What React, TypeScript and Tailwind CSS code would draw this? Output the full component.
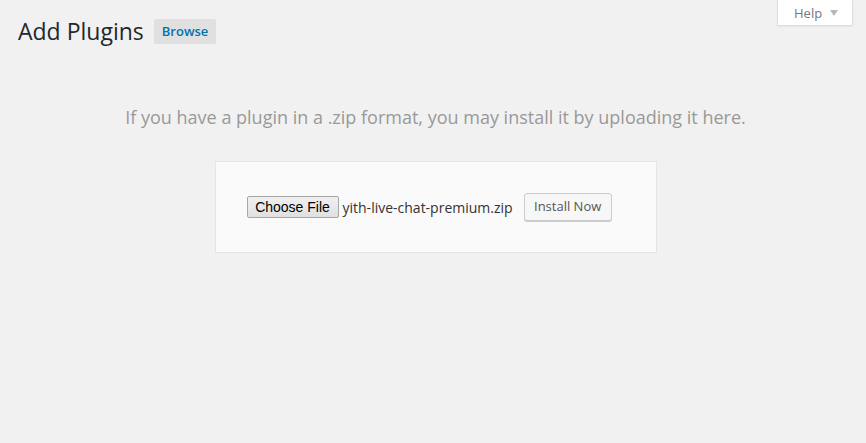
import React from 'react';

const App = () => {
  return (
    <div className="min-h-screen w-full bg-[#f1f1f1] font-['Open_Sans',sans-serif] text-[#444]">
      <div className="flex items-start justify-between pl-[18px] pr-[13px]">
        <div className="flex items-start pt-[17px]">
          <h1 className="text-[23px] leading-[29px] font-normal text-[#23282d]">Add Plugins</h1>
          <span className="ml-[10px] mt-[2px] rounded-[2px] bg-[#e0e0e0] px-[8px] py-[4px] text-[13px] leading-[17px] font-semibold text-[#0073aa]">
            Browse
          </span>
        </div>
        <div className="flex h-[26px] w-[76px] items-center border border-t-0 border-[#ddd] bg-white pl-[16px] shadow-[0_1px_1px_rgba(0,0,0,0.04)]">
          <span className="text-[13px] leading-[18px] text-[#72777c]">Help</span>
          <svg className="ml-[8px]" width="8" height="6" viewBox="0 0 8 6">
            <path d="M0 0H8L4 6Z" fill="#b4b9be" />
          </svg>
        </div>
      </div>

      <div className="pl-[18px] pr-[13px]">
        <p className="mt-[59px] text-center text-[18px] leading-[24px] text-[#999]">
          If you have a plugin in a .zip format, you may install it by uploading it here.
        </p>

        <div className="mx-auto mt-[32px] flex h-[92px] w-[442px] items-center border border-[#e5e5e5] bg-[#fafafa] pl-[31px]">
          <span className="flex h-[22px] w-[92px] items-center justify-center rounded-[2px] border border-[#a6a6a6] bg-gradient-to-b from-[#f0f0f0] to-[#e0e0e0] font-['Liberation_Sans',Arial,sans-serif] text-[14px] text-black">
            Choose File
          </span>
          <span className="ml-[4px] text-[14px] text-[#333]">yith-live-chat-premium.zip</span>
          <button className="ml-[11px] flex h-[28px] w-[88px] items-center justify-center rounded-[3px] border border-[#ccc] bg-[#f7f7f7] pb-[1px] text-[13px] text-[#555] shadow-[0_1px_0_#ccc]">
            Install Now
          </button>
        </div>
      </div>
    </div>
  );
};

export default App;
